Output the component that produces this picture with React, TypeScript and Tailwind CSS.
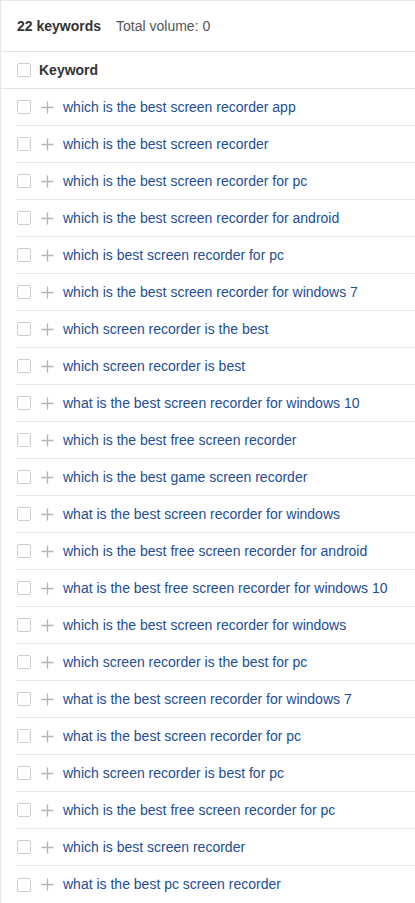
import React from "react";

const keywords = [
  "which is the best screen recorder app",
  "which is the best screen recorder",
  "which is the best screen recorder for pc",
  "which is the best screen recorder for android",
  "which is best screen recorder for pc",
  "which is the best screen recorder for windows 7",
  "which screen recorder is the best",
  "which screen recorder is best",
  "what is the best screen recorder for windows 10",
  "which is the best free screen recorder",
  "which is the best game screen recorder",
  "what is the best screen recorder for windows",
  "which is the best free screen recorder for android",
  "what is the best free screen recorder for windows 10",
  "which is the best screen recorder for windows",
  "which screen recorder is the best for pc",
  "what is the best screen recorder for windows 7",
  "what is the best screen recorder for pc",
  "which screen recorder is best for pc",
  "which is the best free screen recorder for pc",
  "which is best screen recorder",
  "what is the best pc screen recorder",
];

const Checkbox = () => (
  <span className="block h-[14px] w-[14px] shrink-0 rounded-[2px] border border-[#cfcfcf] bg-white" />
);

const Plus = () => (
  <svg width="13" height="13" viewBox="0 0 13 13" className="block shrink-0">
    <path d="M6.5 0.5v12M0.5 6.5h12" stroke="#b3b3b3" strokeWidth="1.3" />
  </svg>
);

export default function App() {
  return (
    <div className="min-h-[903px] w-[415px] overflow-hidden border-l border-t border-[#e8e8e8] bg-white font-['Liberation_Sans',Arial,sans-serif] text-[14px]">
      <div className="flex h-[51px] items-center gap-[15px] border-b border-[#e3e3e3] pl-4">
        <span className="font-bold text-[#333]">22 keywords</span>
        <span className="text-[#555]">Total volume: 0</span>
      </div>
      <div className="flex h-[37px] items-center gap-[8px] border-b border-[#e3e3e3] pl-4">
        <Checkbox />
        <span className="font-bold text-[#333]">Keyword</span>
      </div>
      <ul className="pl-[15px]">
        {keywords.map((k) => (
          <li
            key={k}
            className="flex h-[37px] items-center border-b border-[#e8e8e8] pl-px last:border-b-0"
          >
            <Checkbox />
            <span className="ml-[10px]">
              <Plus />
            </span>
            <span className="ml-[9px] text-[#234e92]">{k}</span>
          </li>
        ))}
      </ul>
    </div>
  );
}
